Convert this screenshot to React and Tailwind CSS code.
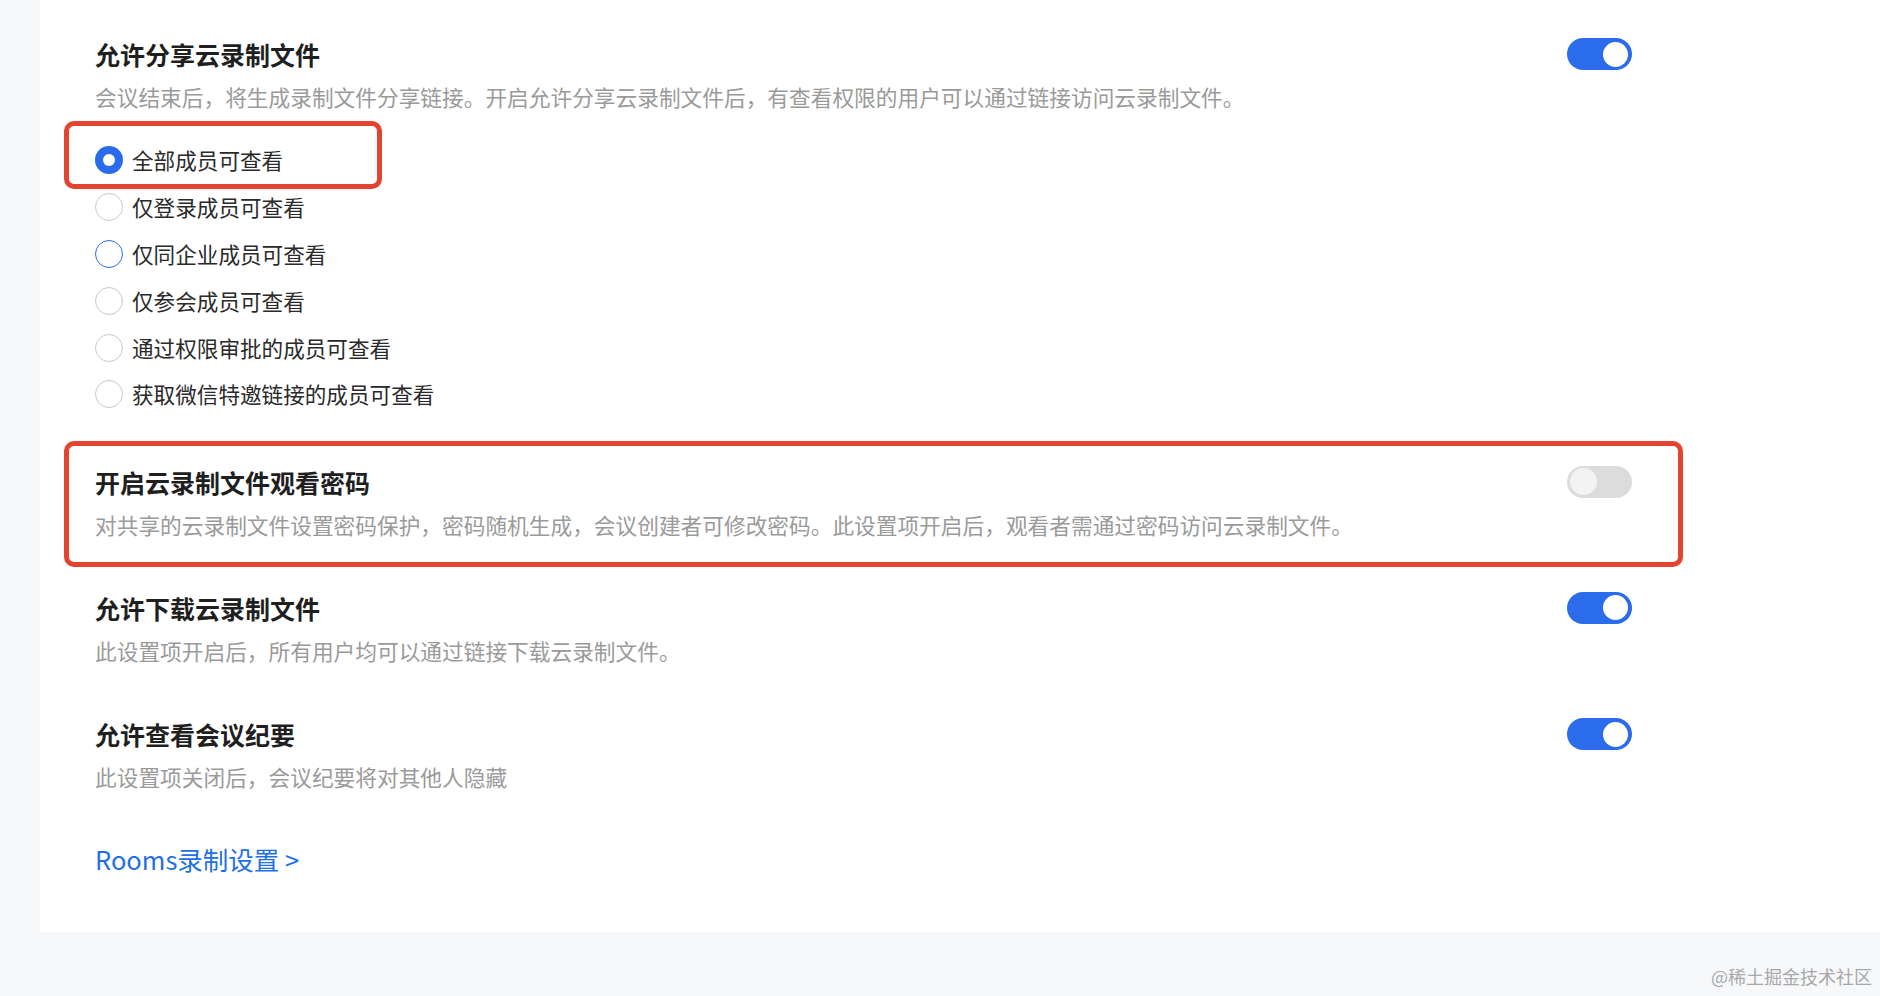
import React from 'react';

const font = { fontFamily: '"Noto Sans CJK SC", "Noto Sans", sans-serif' };

function Toggle({ on }) {
  return (
    <div
      className={
        on
          ? 'flex h-[32px] w-[65px] items-center justify-end rounded-full bg-[#2b6cec] px-[4px]'
          : 'flex h-[32px] w-[65px] items-center justify-start rounded-full bg-[#dcdcdc] px-[3px]'
      }
    >
      <div className={on ? 'h-[25px] w-[25px] rounded-full bg-white' : 'h-[27px] w-[27px] rounded-full bg-[#f3f3f3]'} />
    </div>
  );
}

function Radio({ label, checked, hover }) {
  return (
    <div className="flex h-[46.8px] items-center gap-[9px]">
      {checked ? (
        <div className="flex h-[28px] w-[28px] items-center justify-center rounded-full bg-[#2b6cec]">
          <div className="h-[12px] w-[12px] rounded-full bg-white" />
        </div>
      ) : (
        <div
          className={
            hover
              ? 'h-[28px] w-[28px] rounded-full border border-[#2b6cec] bg-white'
              : 'h-[28px] w-[28px] rounded-full border border-[#c9c9c9] bg-white'
          }
        />
      )}
      <span className="text-[21.6px] leading-[30px] text-[#2a2a2a]">{label}</span>
    </div>
  );
}

function Section({ title, desc, on }) {
  return (
    <div>
      <div className="flex h-[34px] items-center justify-between">
        <h3 className="text-[25px] font-bold leading-[34px] text-[#1f1f1f]">{title}</h3>
        <Toggle on={on} />
      </div>
      <p className="mt-[11px] text-[21.7px] leading-[30px] text-[#9a9a9a]">{desc}</p>
    </div>
  );
}

export default function App() {
  return (
    <div className="flex min-h-[996px] w-[1880px] flex-col bg-[#f7f8fa]" style={font}>
      <div className="flex">
        <div className="w-[40px]" />
        <div className="h-[932px] flex-1 bg-white pl-[55px] pt-[37px]">
          <div className="w-[1537px]">
            {/* 分享 */}
            <Section
              title="允许分享云录制文件"
              desc="会议结束后，将生成录制文件分享链接。开启允许分享云录制文件后，有查看权限的用户可以通过链接访问云录制文件。"
              on
            />

            <div className="mt-[25px]">
              <div className="relative">
                <Radio label="全部成员可查看" checked />
                <div className="pointer-events-none absolute -left-[31px] -top-[16px] -bottom-[5px] w-[318px] rounded-[10px] border-[5px] border-[#e4432f]" />
              </div>
              <Radio label="仅登录成员可查看" />
              <Radio label="仅同企业成员可查看" hover />
              <Radio label="仅参会成员可查看" />
              <Radio label="通过权限审批的成员可查看" />
              <Radio label="获取微信特邀链接的成员可查看" />
            </div>

            {/* 密码 */}
            <div className="relative mt-[47px]">
              <Section
                title="开启云录制文件观看密码"
                desc="对共享的云录制文件设置密码保护，密码随机生成，会议创建者可修改密码。此设置项开启后，观看者需通过密码访问云录制文件。"
              />
              <div className="pointer-events-none absolute -left-[31px] -right-[51px] -top-[24px] -bottom-[27px] rounded-[10px] border-[5px] border-[#e4432f]" />
            </div>

            <div className="mt-[51px]">
              <Section title="允许下载云录制文件" desc="此设置项开启后，所有用户均可以通过链接下载云录制文件。" on />
            </div>

            <div className="mt-[51.5px]">
              <Section title="允许查看会议纪要" desc="此设置项关闭后，会议纪要将对其他人隐藏" on />
            </div>

            <a href="#" className="mt-[49.5px] inline-block text-[25.5px] leading-[34px] text-[#1f6fe5]">
              Rooms录制设置 &gt;
            </a>
          </div>
        </div>
      </div>
      <div className="flex h-[64px] items-end justify-end pb-[6px] pr-[8px]">
        <span className="text-[18px] text-[#a8a8a8]">@稀土掘金技术社区</span>
      </div>
    </div>
  );
}
